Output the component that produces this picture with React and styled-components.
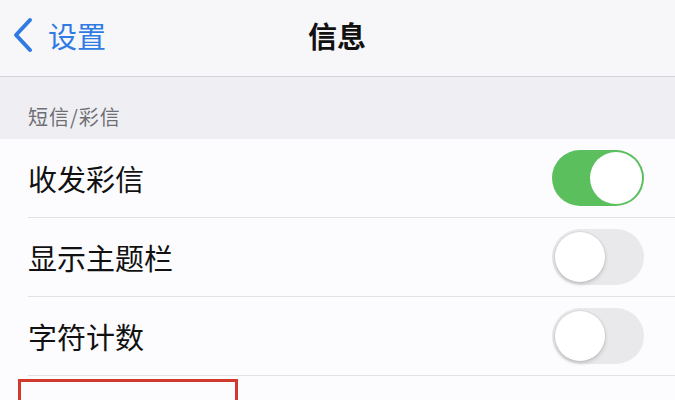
import React from 'react';
import styled, { createGlobalStyle } from 'styled-components';

const GlobalStyle = createGlobalStyle`
  html, body {
    margin: 0;
    padding: 0;
    background: #fcfcfe;
  }
  body {
    font-family: "Noto Sans CJK SC", "Noto Sans", sans-serif;
  }
`;

const rows = [
  { label: '收发彩信', on: true },
  { label: '显示主题栏', on: false },
  { label: '字符计数', on: false },
];

const App = () => (
  <>
    <GlobalStyle />
    <Screen>
      <NavBar>
        <BackButton>
          <svg width="22" height="36" viewBox="0 0 22 36">
            <polyline
              points="18,3 4,18 18,33"
              fill="none"
              stroke="#2f7be3"
              strokeWidth="4"
              strokeLinecap="round"
              strokeLinejoin="round"
            />
          </svg>
          <BackLabel>设置</BackLabel>
        </BackButton>
        <NavTitle>信息</NavTitle>
        <span />
      </NavBar>
      <SectionHeader>短信/彩信</SectionHeader>
      <List>
        {rows.map((r) => (
          <Row key={r.label}>
            <RowInner>
              <RowLabel>{r.label}</RowLabel>
              <Toggle $on={r.on}>
                <Knob $on={r.on} />
              </Toggle>
            </RowInner>
          </Row>
        ))}
        <LastRow>
          <Highlight />
        </LastRow>
      </List>
    </Screen>
  </>
);

const Screen = styled.div`
  width: 675px;
  height: 400px;
  overflow: hidden;
  background: #fcfcfe;
  display: flex;
  flex-direction: column;
`;

const NavBar = styled.div`
  height: 77px;
  box-sizing: border-box;
  padding-bottom: 6px;
  flex-shrink: 0;
  background: #f7f7f9;
  border-bottom: 1px solid #d4d4d8;
  display: grid;
  grid-template-columns: 1fr auto 1fr;
  align-items: center;
`;

const BackButton = styled.div`
  display: flex;
  align-items: center;
  padding-left: 12px;
  gap: 14px;
`;

const BackLabel = styled.span`
  font-size: 29px;
  color: #2f7be3;
  line-height: 1;
`;

const NavTitle = styled.div`
  font-size: 29px;
  font-weight: 700;
  color: #111;
  line-height: 1;
  margin-left: -1px;
`;

const SectionHeader = styled.div`
  height: 62px;
  flex-shrink: 0;
  background: #efeff3;
  padding-left: 28px;
  display: flex;
  align-items: center;
  padding-top: 16px;
  box-sizing: border-box;
  font-size: 20px;
  color: #6e6e73;
  letter-spacing: 1px;
`;

const List = styled.div`
  display: flex;
  flex-direction: column;
  background: #fcfcfe;
`;

const Row = styled.div`
  padding-left: 28px;
`;

const RowInner = styled.div`
  height: 78px;
  border-bottom: 1px solid #e2e2e6;
  display: flex;
  align-items: center;
  justify-content: space-between;
  padding-right: 31px;
`;

const RowLabel = styled.span`
  font-size: 29px;
  color: #111;
  line-height: 1;
`;

const Toggle = styled.div`
  width: 92px;
  height: 56px;
  border-radius: 28px;
  box-sizing: border-box;
  background: ${(p) => (p.$on ? '#5bbf5e' : '#e9e9ec')};
  display: flex;
  align-items: center;
  justify-content: ${(p) => (p.$on ? 'flex-end' : 'flex-start')};
  padding: ${(p) => (p.$on ? '2px' : '3px')};
`;

const Knob = styled.div`
  width: ${(p) => (p.$on ? '52px' : '50px')};
  height: ${(p) => (p.$on ? '52px' : '50px')};
  border-radius: 50%;
  background: #fff;
  box-shadow: ${(p) =>
    p.$on ? 'none' : '0 2px 4px rgba(0,0,0,0.18), 0 0 0 1px rgba(0,0,0,0.04)'};
`;

const LastRow = styled.div`
  height: 40px;
  padding: 3px 0 0 18px;
`;

const Highlight = styled.div`
  width: 220px;
  height: 60px;
  box-sizing: border-box;
  border: 3px solid #d4392e;
`;

export default App;
